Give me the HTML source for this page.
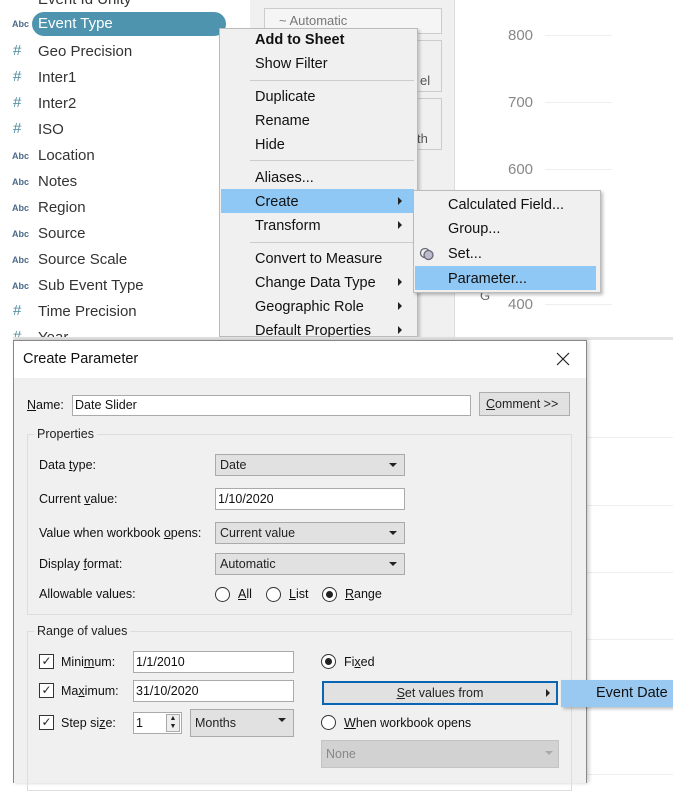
<!DOCTYPE html>
<html><head><style>
*{margin:0;padding:0;box-sizing:border-box}
body{width:673px;height:783px;overflow:hidden;background:#fff;font-family:"Liberation Sans",sans-serif;position:relative;color:#222}
.a{position:absolute;white-space:nowrap}
.f{font-size:15px;color:#333}
.ic{font-size:9px;color:#4a6a8a;font-weight:bold}
.hash{font-size:15px;color:#4a8aa0}
.m{font-size:14.5px;color:#111;left:255px}
.sep{position:absolute;height:1px;background:#ccc;left:250px;width:164px}
.arr{position:absolute;width:0;height:0;border-left:4px solid #222;border-top:4px solid transparent;border-bottom:4px solid transparent}
.d{font-size:12.5px;color:#111}
.box{position:absolute;border:1px solid #aaa;background:#fff}
.sel{position:absolute;border:1px solid #aaa;background:#e1e1e1;font-size:12.5px;padding:3px 4px}
.sel:after{content:"";position:absolute;right:7px;top:8px;border-top:4px solid #222;border-left:4px solid transparent;border-right:4px solid transparent}
.rad{position:absolute;width:15px;height:15px;border:1px solid #333;border-radius:50%;background:#fff}
.rad.on:after{content:"";position:absolute;left:3px;top:3px;width:7px;height:7px;border-radius:50%;background:#222}
.cb{position:absolute;width:15px;height:15px;border:1px solid #333;background:#fff;font-size:12px;line-height:13px;text-align:center}
.grp{position:absolute;border:1px solid #ddd}
.gl{position:absolute;background:#f0f0f0;padding:0 3px;font-size:12.5px}
</style></head><body>
<div class="a" style="left:250px;top:0;width:205px;height:337px;background:#f0f0f0;border-right:1px solid #ddd"></div>
<div class="a" style="left:264px;top:8px;width:178px;height:26px;border:1px solid #ccc;background:#f5f5f5;font-size:13px;color:#777;padding:4px 14px">~ Automatic</div>
<div class="a" style="left:264px;top:40px;width:178px;height:52px;border:1px solid #ccc;font-size:13px;color:#555;padding:32px 0 0 155px">el</div>
<div class="a" style="left:264px;top:98px;width:178px;height:52px;border:1px solid #ccc;font-size:13px;color:#555;padding:32px 0 0 152px">th</div>
<div class="a" style="left:508px;top:27px;font-size:15px;color:#888">800</div>
<div class="a" style="left:508px;top:94px;font-size:15px;color:#888">700</div>
<div class="a" style="left:508px;top:161px;font-size:15px;color:#888">600</div>
<div class="a" style="left:508px;top:296px;font-size:15px;color:#888">400</div>
<div class="a" style="left:545px;top:35px;width:67px;height:1px;background:#eee"></div>
<div class="a" style="left:545px;top:102px;width:67px;height:1px;background:#eee"></div>
<div class="a" style="left:545px;top:169px;width:67px;height:1px;background:#eee"></div>
<div class="a" style="left:545px;top:304px;width:67px;height:1px;background:#eee"></div>
<div class="a" style="left:480px;top:288px;font-size:13px;color:#666">G</div>
<div class="a f" style="left:38px;top:-9px">Event Id Unity</div>
<div class="a" style="left:32px;top:12px;width:194px;height:24px;background:#4e94ae;border-radius:12px"></div>
<div class="a f" style="left:38px;top:15px;color:#fff">Event Type</div>
<div class="a ic" style="left:12px;top:19px">Abc</div>
<div class="a hash" style="left:13px;top:42px">#</div><div class="a f" style="left:38px;top:43px">Geo Precision</div>
<div class="a hash" style="left:13px;top:68px">#</div><div class="a f" style="left:38px;top:69px">Inter1</div>
<div class="a hash" style="left:13px;top:94px">#</div><div class="a f" style="left:38px;top:95px">Inter2</div>
<div class="a hash" style="left:13px;top:120px">#</div><div class="a f" style="left:38px;top:121px">ISO</div>
<div class="a ic" style="left:12px;top:151px">Abc</div><div class="a f" style="left:38px;top:147px">Location</div>
<div class="a ic" style="left:12px;top:177px">Abc</div><div class="a f" style="left:38px;top:173px">Notes</div>
<div class="a ic" style="left:12px;top:203px">Abc</div><div class="a f" style="left:38px;top:199px">Region</div>
<div class="a ic" style="left:12px;top:229px">Abc</div><div class="a f" style="left:38px;top:225px">Source</div>
<div class="a ic" style="left:12px;top:255px">Abc</div><div class="a f" style="left:38px;top:251px">Source Scale</div>
<div class="a ic" style="left:12px;top:281px">Abc</div><div class="a f" style="left:38px;top:277px">Sub Event Type</div>
<div class="a hash" style="left:13px;top:302px">#</div><div class="a f" style="left:38px;top:303px">Time Precision</div>
<div class="a hash" style="left:13px;top:328px">#</div><div class="a f" style="left:38px;top:329px">Year</div>
<div class="a" style="left:219px;top:28px;width:199px;height:309px;background:#f0f0f0;border:1px solid #bbb;box-shadow:2px 2px 3px rgba(0,0,0,.2)"></div>
<div class="a" style="left:221px;top:189px;width:193px;height:24px;background:#90c8f5"></div>
<div class="a m" style="top:32px;font-weight:bold">Add to Sheet</div>
<div class="a m" style="top:56px">Show Filter</div>
<div class="sep" style="top:80px"></div>
<div class="a m" style="top:89px">Duplicate</div>
<div class="a m" style="top:113px">Rename</div>
<div class="a m" style="top:137px">Hide</div>
<div class="sep" style="top:160px"></div>
<div class="a m" style="top:170px">Aliases...</div>
<div class="a m" style="top:194px">Create</div><div class="arr" style="left:398px;top:197px"></div>
<div class="a m" style="top:218px">Transform</div><div class="arr" style="left:398px;top:221px"></div>
<div class="sep" style="top:242px"></div>
<div class="a m" style="top:251px">Convert to Measure</div>
<div class="a m" style="top:275px">Change Data Type</div><div class="arr" style="left:398px;top:278px"></div>
<div class="a m" style="top:299px">Geographic Role</div><div class="arr" style="left:398px;top:302px"></div>
<div class="a m" style="top:323px">Default Properties</div><div class="arr" style="left:398px;top:326px"></div>
<div class="a" style="left:413px;top:190px;width:188px;height:103px;background:#f0f0f0;border:1px solid #bbb;box-shadow:2px 2px 3px rgba(0,0,0,.25)"></div>
<div class="a" style="left:415px;top:266px;width:181px;height:24px;background:#90c8f5"></div>
<div class="a m" style="left:448px;top:197px">Calculated Field...</div>
<div class="a m" style="left:448px;top:221px">Group...</div>
<div class="a m" style="left:448px;top:246px">Set...</div>
<svg class="a" style="left:419px;top:246px" width="16" height="16"><circle cx="6" cy="7" r="4.5" fill="none" stroke="#667" stroke-width="1.3"/><circle cx="9.5" cy="9" r="4.5" fill="#bbc" stroke="#667" stroke-width="1.3"/></svg>
<div class="a m" style="left:448px;top:271px">Parameter...</div>
<div class="a" style="left:13px;top:337px;width:660px;height:3px;background:#e4e4e4"></div>
<div class="a" style="left:587px;top:437px;width:86px;height:1px;background:#eee"></div>
<div class="a" style="left:587px;top:505px;width:86px;height:1px;background:#eee"></div>
<div class="a" style="left:587px;top:572px;width:86px;height:1px;background:#eee"></div>
<div class="a" style="left:587px;top:639px;width:86px;height:1px;background:#eee"></div>
<div class="a" style="left:587px;top:774px;width:86px;height:1px;background:#eee"></div>
<div class="a" style="left:13px;top:340px;width:574px;height:443px;background:#f0f0f0;border:1px solid #888;border-bottom:none;box-shadow:2px 0 4px rgba(0,0,0,.2)"></div>
<div class="a" style="left:14px;top:341px;width:572px;height:37px;background:#fff"></div>
<div class="a" style="left:23px;top:351px;font-size:14.5px;color:#111">Create Parameter</div>
<svg class="a" style="left:556px;top:352px" width="14" height="14"><path d="M1 1L13 13M13 1L1 13" stroke="#222" stroke-width="1.2"/></svg>
<div class="a d" style="left:27px;top:398px"><u>N</u>ame:</div>
<div class="box" style="left:72px;top:395px;width:399px;height:21px"></div>
<div class="a d" style="left:75px;top:398px">Date Slider</div>
<div class="a" style="left:479px;top:392px;width:91px;height:24px;background:#e1e1e1;border:1px solid #adadad;font-size:12.5px;padding:4px 6px"><u>C</u>omment &gt;&gt;</div>
<div class="grp" style="left:27px;top:434px;width:545px;height:181px"></div>
<div class="gl" style="left:34px;top:427px">Properties</div>
<div class="a d" style="left:39px;top:458px">Data <u>t</u>ype:</div>
<div class="sel" style="left:215px;top:454px;width:190px;height:22px">Date</div>
<div class="a d" style="left:39px;top:492px">Current <u>v</u>alue:</div>
<div class="box" style="left:215px;top:488px;width:190px;height:22px"></div>
<div class="a d" style="left:218px;top:492px">1/10/2020</div>
<div class="a d" style="left:39px;top:526px">Value when workbook <u>o</u>pens:</div>
<div class="sel" style="left:215px;top:522px;width:190px;height:22px">Current value</div>
<div class="a d" style="left:39px;top:557px">Display <u>f</u>ormat:</div>
<div class="sel" style="left:215px;top:553px;width:190px;height:22px">Automatic</div>
<div class="a d" style="left:39px;top:587px">Allowable values:</div>
<div class="rad" style="left:215px;top:587px"></div><div class="a d" style="left:238px;top:587px"><u>A</u>ll</div>
<div class="rad" style="left:266px;top:587px"></div><div class="a d" style="left:289px;top:587px"><u>L</u>ist</div>
<div class="rad on" style="left:322px;top:587px"></div><div class="a d" style="left:345px;top:587px"><u>R</u>ange</div>
<div class="grp" style="left:27px;top:631px;width:545px;height:160px"></div>
<div class="gl" style="left:34px;top:624px">Range of values</div>
<div class="cb" style="left:39px;top:654px">✓</div><div class="a d" style="left:61px;top:655px">Mini<u>m</u>um:</div>
<div class="box" style="left:133px;top:651px;width:161px;height:22px"></div><div class="a d" style="left:136px;top:655px">1/1/2010</div>
<div class="cb" style="left:39px;top:683px">✓</div><div class="a d" style="left:61px;top:684px">Ma<u>x</u>imum:</div>
<div class="box" style="left:133px;top:680px;width:161px;height:22px"></div><div class="a d" style="left:136px;top:684px">31/10/2020</div>
<div class="cb" style="left:39px;top:715px">✓</div><div class="a d" style="left:61px;top:716px">Step si<u>z</u>e:</div>
<div class="box" style="left:133px;top:712px;width:49px;height:22px"></div><div class="a d" style="left:136px;top:716px">1</div>
<div class="a" style="left:166px;top:714px;width:14px;height:18px;border:1px solid #aaa;background:#eee;font-size:7px;line-height:8px;text-align:center">▲<br>▼</div>
<div class="sel" style="left:190px;top:709px;width:104px;height:28px;padding-top:6px">Months</div>
<div class="rad on" style="left:321px;top:654px"></div><div class="a d" style="left:344px;top:655px">Fi<u>x</u>ed</div>
<div class="a" style="left:322px;top:681px;width:236px;height:24px;background:#e1e1e1;border:2px solid #0a64b4;font-size:12.5px;text-align:center;padding-top:3px"><u>S</u>et values from</div>
<div class="arr" style="left:546px;top:689px"></div>
<div class="a" style="left:561px;top:680px;width:112px;height:27px;background:#99c9f0;box-shadow:2px 2px 3px rgba(0,0,0,.25);font-size:14.5px;padding:5px 0 0 35px;color:#111">Event Date</div>
<div class="rad" style="left:321px;top:715px"></div><div class="a d" style="left:344px;top:716px"><u>W</u>hen workbook opens</div>
<div class="a" style="left:321px;top:740px;width:238px;height:28px;background:#d2d2d2;border:1px solid #c4c4c4;font-size:12.5px;color:#888;padding:6px 4px">None</div>
<div class="a" style="left:545px;top:751px;border-top:4px solid #aaa;border-left:4px solid transparent;border-right:4px solid transparent"></div>
</body></html>
